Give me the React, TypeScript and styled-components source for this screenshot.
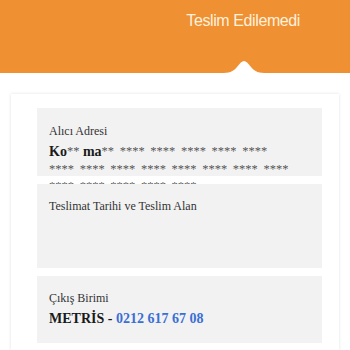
import React from "react";
import styled, { createGlobalStyle } from "styled-components";

const Global = createGlobalStyle`
  html, body { margin: 0; padding: 0; background: #ffffff; }
  body { width: 350px; height: 350px; overflow: hidden; }
`;

const Page = styled.div`
  width: 350px;
  height: 350px;
  display: flex;
  flex-direction: column;
  background: #ffffff;
`;

const Header = styled.div`
  position: relative;
  height: 73px;
  flex-shrink: 0;
  background: #ef9033;
  display: flex;
  justify-content: flex-end;
  padding: 11px 50px 0 0;
  box-sizing: border-box;
`;

const Title = styled.div`
  font-family: "Liberation Sans", Arial, sans-serif;
  font-size: 16px;
  letter-spacing: -0.4px;
  color: #fff1dc;
  line-height: 20px;
`;

const Notch = styled.svg`
  position: absolute;
  left: 221px;
  bottom: 0;
  display: block;
`;

const Card = styled.div`
  margin: 21px 11px 0 11px;
  background: #ffffff;
  box-shadow: 0 0 3px rgba(0, 0, 0, 0.12);
  padding: 14px 17px 0 26px;
  display: flex;
  flex-direction: column;
  gap: 8px;
  flex: 1;
`;

const Section = styled.div<{ $h: number; $pt: number }>`
  position: relative;
  flex-shrink: 0;
  height: ${(p) => p.$h}px;
  padding: ${(p) => p.$pt}px 28px 0 12px;
  box-sizing: border-box;
  background: #f2f2f2;
  font-family: "Liberation Serif", "Times New Roman", serif;
`;

const Label = styled.div`
  font-size: 12px;
  line-height: 16px;
  color: #333333;
`;

const Value = styled.div`
  margin-top: 4px;
  font-size: 14px;
  line-height: 17.5px;
  font-weight: bold;
  color: #1a1a1a;
`;

const Masked = styled.span`
  font-size: 12.5px;
  line-height: 1;
  font-weight: normal;
  color: #555555;
  word-spacing: 2.5px;
  vertical-align: 1px;
`;

const Phone = styled.span`
  color: #3a6fd4;
`;

export default function App() {
  return (
    <Page>
      <Global />
      <Header>
        <Title>Teslim Edilemedi</Title>
        <Notch width="46" height="13" viewBox="0 0 46 13">
          <path
            d="M0 13 C8 13 12 12 16 7 C19 3 21 1 23 1 C25 1 27 3 30 7 C34 12 38 13 46 13 Z"
            fill="#ffffff"
          />
        </Notch>
      </Header>
      <Card>
        <Section $h={68} $pt={15}>
          <Label>Alıcı Adresi</Label>
          <Value>
            Ko<Masked>**</Masked> ma
            <Masked>
              ** **** **** **** **** **** **** **** **** **** **** **** ****
              **** **** **** **** **** ****
            </Masked>
          </Value>
        </Section>
        <Section $h={84} $pt={14}>
          <Label>Teslimat Tarihi ve Teslim Alan</Label>
        </Section>
        <Section $h={67} $pt={14}>
          <Label>Çıkış Birimi</Label>
          <Value>
            METRİS - <Phone>0212 617 67 08</Phone>
          </Value>
        </Section>
      </Card>
    </Page>
  );
}
